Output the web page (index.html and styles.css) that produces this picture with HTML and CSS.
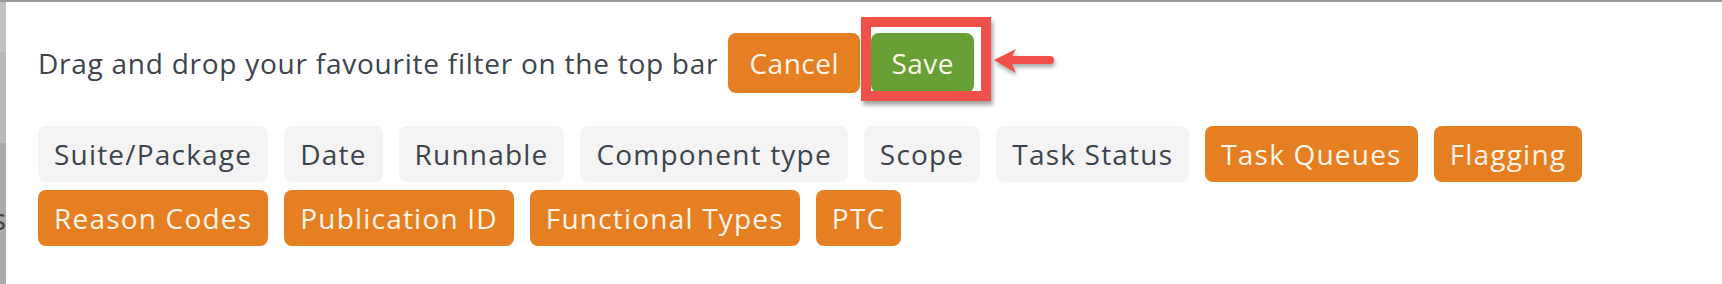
FILE: index.html
```html
<!DOCTYPE html>
<html lang="en">
<head>
<meta charset="UTF-8" />
<title>Favourite filters</title>
<link rel="stylesheet" href="styles.css">
</head>
<body>
<div class="backdrop">
  <div class="side"><span>s</span></div>

  <div class="modal">
    <div class="toolbar">
      <span class="hint">Drag and drop your favourite filter on the top bar</span>
      <button class="btn btn-cancel">Cancel</button>
      <span class="callout">
        <button class="btn btn-save">Save</button>
        <svg class="arrow" width="64" height="34" viewBox="0 0 64 34">
          <path d="M4 13 L26 2 L20 13 Z M4 13 L26 26 L20 13 Z" fill="#f0504a"/>
          <line x1="18" y1="13" x2="60" y2="13" stroke="#f0504a" stroke-width="8" stroke-linecap="round"/>
        </svg>
      </span>
    </div>

    <div class="filters">
      <span class="chip">Suite/Package</span>
      <span class="chip">Date</span>
      <span class="chip">Runnable</span>
      <span class="chip">Component type</span>
      <span class="chip">Scope</span>
      <span class="chip">Task Status</span>
      <span class="chip fav">Task Queues</span>
      <span class="chip fav">Flagging</span>
      <span class="chip fav">Reason Codes</span>
      <span class="chip fav">Publication ID</span>
      <span class="chip fav">Functional Types</span>
      <span class="chip fav">PTC</span>
    </div>
  </div>
</div>
</body>
</html>
```

FILE: styles.css
```css
body {
  margin: 0;
  font-family: "Open Sans", "Liberation Sans", sans-serif;
  background: #fff;
}
.backdrop {
  display: flex;
  height: 284px;
  border-top: 2px solid #9b9b9b;
  box-sizing: border-box;
}

/* page behind the dialog */
.side {
  width: 6px;
  flex-shrink: 0;
  overflow: hidden;
  display: flex;
  justify-content: flex-end;
  background: linear-gradient(#c2c2c2 0, #c2c2c2 50px, #bababa 50px, #bababa 141px, #ababab 141px);
}
.side span {
  margin-top: 196px;
  font-size: 30px;
  color: #3d4248;
}

.modal {
  flex: 1;
  background: #fff;
  padding: 31px 32px 0;
}

.toolbar {
  display: flex;
  align-items: center;
  height: 60px;
}
.hint {
  font-size: 28px;
  letter-spacing: 0.75px;
  color: #3c444d;
  margin-right: 10px;
}
.btn {
  font-family: inherit;
  font-size: 28px;
  letter-spacing: 0.5px;
  color: #fdf5e9;
  border: none;
  border-radius: 8px;
  height: 60px;
  padding: 0 12px;
}
.btn-cancel {
  background: #e67f22;
  width: 132px;
}
.btn-save {
  background: #67a136;
  width: 103px;
}

/* screenshot annotation round the save button */
.callout {
  position: relative;
  margin-left: 11px;
  display: flex;
}
.callout::after {
  content: "";
  position: absolute;
  left: -10px;
  top: -16px;
  width: 110px;
  height: 64px;
  border: 10px solid #f0504a;
  box-shadow: 2px 4px 4px rgba(0,0,0,0.35);
}
.arrow {
  position: absolute;
  left: 119px;
  top: 14px;
  filter: drop-shadow(1px 3px 2px rgba(0,0,0,0.35));
}

.filters {
  display: flex;
  flex-wrap: wrap;
  gap: 8px 16px;
  margin-top: 33px;
  width: 1600px;
}
.chip {
  display: inline-flex;
  align-items: center;
  height: 56px;
  padding: 0 16px;
  border-radius: 8px;
  font-size: 28px;
  letter-spacing: 1.2px;
  background: #f4f4f5;
  color: #3c444d;
}
.chip.fav {
  background: #e67f22;
  color: #fdf5e9;
}
```
